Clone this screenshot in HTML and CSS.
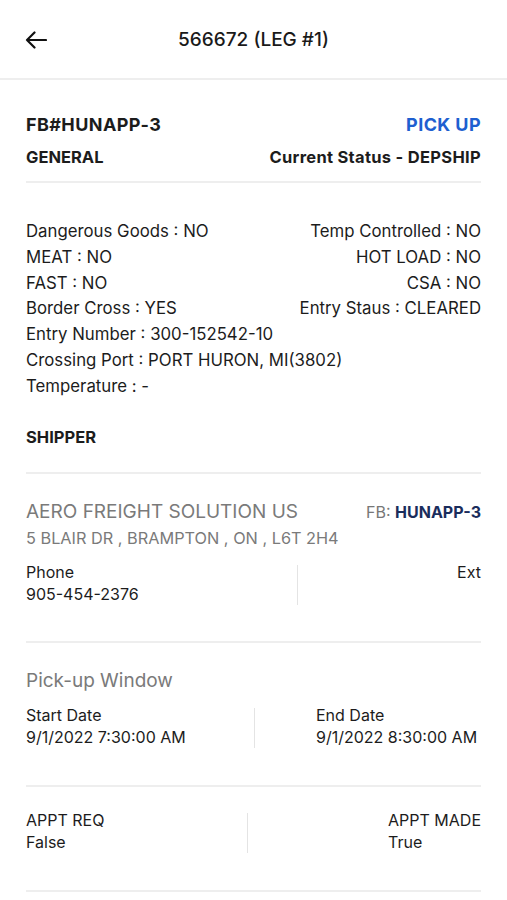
FILE: index.html
```html
<!DOCTYPE html>
<html lang="en">
<head>
  <meta charset="UTF-8">
  <title>566672 (LEG #1)</title>
  <link rel="stylesheet" href="styles.css">
</head>
<body>
  <div class="topbar">
    <span class="back">
      <svg width="22" height="18" viewBox="0 0 22 18"><path d="M21 9H2M9.5 1.5L2 9l7.5 7.5" fill="none" stroke="#111" stroke-width="2.2" stroke-linecap="round" stroke-linejoin="round"/></svg>
    </span>
    <h1 class="title">566672 (LEG #1)</h1>
  </div>

  <div class="content">
    <div class="row-between head">
      <span class="fb">FB#HUNAPP-3</span>
      <span class="pickup">PICK UP</span>
    </div>
    <div class="row-between sub">
      <span class="label-bold">GENERAL</span>
      <span class="label-bold">Current Status - DEPSHIP</span>
    </div>
    <hr class="line">

    <div class="facts">
      <span>Dangerous Goods : NO</span><span class="r">Temp Controlled : NO</span>
      <span>MEAT : NO</span><span class="r">HOT LOAD : NO</span>
      <span>FAST : NO</span><span class="r">CSA : NO</span>
      <span>Border Cross : YES</span><span class="r">Entry Staus : CLEARED</span>
      <span class="full">Entry Number : 300-152542-10</span>
      <span class="full">Crossing Port : PORT HURON, MI(3802)</span>
      <span class="full">Temperature : -</span>
    </div>

    <div class="label-bold shipper">SHIPPER</div>
    <hr class="line">

    <div class="company">
      <div class="row-between">
        <span class="name">AERO FREIGHT SOLUTION US</span>
        <span class="fbref"><span class="fbkey">FB:</span> <b>HUNAPP-3</b></span>
      </div>
      <div class="addr">5 BLAIR DR , BRAMPTON , ON , L6T 2H4</div>
      <div class="pair phone">
        <div class="cell"><div>Phone</div><div>905-454-2376</div></div>
        <div class="vsep"></div>
        <div class="cell right"><div>Ext</div><div>&nbsp;</div></div>
      </div>
    </div>
    <hr class="line">

    <div class="window">
      <div class="name">Pick-up Window</div>
      <div class="pair dates">
        <div class="cell"><div>Start Date</div><div>9/1/2022 7:30:00 AM</div></div>
        <div class="vsep"></div>
        <div class="cell"><div>End Date</div><div>9/1/2022 8:30:00 AM</div></div>
      </div>
    </div>
    <hr class="line">

    <div class="pair appt">
      <div class="cell"><div>APPT REQ</div><div>False</div></div>
      <div class="vsep"></div>
      <div class="cell end"><div>APPT MADE</div><div>True</div></div>
    </div>
    <hr class="line">
  </div>
</body>
</html>
```

FILE: styles.css
```css
body {
  margin: 0;
  font-family: Inter, "Liberation Sans", sans-serif;
  color: #1c1c1c;
  background: #fff;
}
.topbar {
  height: 78px;
  border-bottom: 2px solid #eeeeee;
  display: flex;
  align-items: center;
  justify-content: center;
  position: relative;
}
.back {
  position: absolute;
  left: 25px;
  top: 31px;
}
.title {
  margin: 0;
  font-size: 19px;
  font-weight: 500;
  color: #1a1a1a;
}
.content {
  padding: 0 26px;
}
.row-between {
  display: flex;
  justify-content: space-between;
  align-items: baseline;
}
.head {
  margin-top: 34px;
  font-size: 18px;
  font-weight: 700;
  letter-spacing: 0.4px;
}
.pickup {
  color: #1e5fd0;
}
.sub {
  margin-top: 12px;
}
.label-bold {
  font-size: 16.5px;
  font-weight: 700;
}
.sub .label-bold:last-child {
  letter-spacing: 0.3px;
}
.line {
  border: 0;
  border-top: 2px solid #eeeeee;
  margin: 0;
}
.sub + .line {
  margin-top: 14px;
}
.facts {
  display: grid;
  grid-template-columns: 1fr 1fr;
  font-size: 16.8px;
  line-height: 25.8px;
  margin-top: 36px;
}
.facts .r {
  text-align: right;
}
.facts .full {
  grid-column: 1 / 3;
}
.shipper {
  margin-top: 27px;
  margin-bottom: 25px;
}
.company {
  padding: 26px 0 36px;
}
.name {
  font-size: 19px;
  color: #7a7a7a;
}
.fbref {
  font-size: 16px;
}
.fbkey {
  color: #777;
}
.fbref b {
  color: #1a2d5c;
}
.addr {
  margin-top: 5px;
  font-size: 16.3px;
  color: #7a7a7a;
}
.pair {
  display: grid;
  font-size: 16px;
  line-height: 22px;
}
.phone {
  margin-top: 13px;
  grid-template-columns: 271px 1px 1fr;
}
.cell.right {
  text-align: right;
}
.vsep {
  background: #e4e4e4;
  margin-top: 4px;
}
.window {
  padding: 26px 0 37px;
}
.dates {
  margin-top: 12px;
  grid-template-columns: 228px 1px 1fr;
}
.dates .cell:last-child {
  padding-left: 61px;
}
.appt {
  grid-template-columns: 221px 1px 1fr;
  padding: 22px 0 27px;
  margin-bottom: 10px;
}
.appt .end {
  justify-self: end;
}
```
